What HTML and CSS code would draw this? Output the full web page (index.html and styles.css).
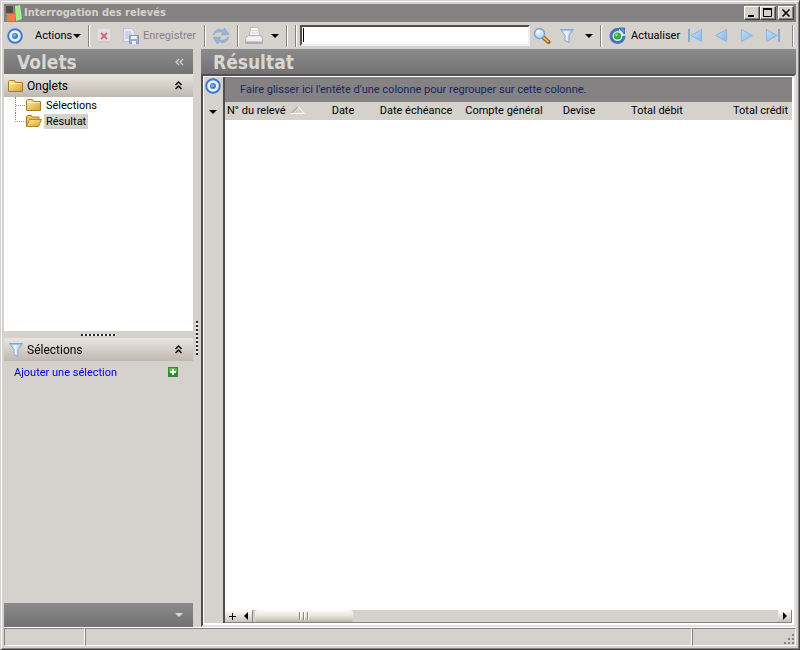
FILE: index.html
```html
<!DOCTYPE html>
<html lang="fr">
<head>
<meta charset="utf-8">
<title>Interrogation des relevés</title>
<link rel="stylesheet" href="styles.css">
</head>
<body>
<svg class="defs" aria-hidden="true">
  <defs>
    <linearGradient id="gold" x1="0" y1="0" x2="1" y2="1"><stop offset="0" stop-color="#fff0a0"/><stop offset="1" stop-color="#daa02c"/></linearGradient>
    <linearGradient id="blue" x1="0" y1="0" x2="1" y2="1"><stop offset="0" stop-color="#c4dff8"/><stop offset="1" stop-color="#86b8ec"/></linearGradient>
    <linearGradient id="glass" x1="0" y1="0" x2="1" y2="0"><stop offset="0" stop-color="#a9c9f4"/><stop offset=".45" stop-color="#eef6ff"/><stop offset="1" stop-color="#8db1e8"/></linearGradient>
    <symbol id="target" viewBox="0 0 18 18">
      <circle cx="9" cy="9" r="6.800" fill="#e8f1fc" stroke="#4379cb" stroke-width="2"/>
      <circle cx="9" cy="9" r="3" fill="#3f7fd0"/>
      <circle cx="8.500" cy="8.500" r="1.500" fill="#7fb0ea"/>
    </symbol>
    <symbol id="folder" viewBox="0 0 16 16">
      <path d="M.5 13.500v-10l1-1h5l1 2h7v9h-14z" fill="url(#gold)" stroke="#a87c26"/>
      <path d="M1.500 5.500h12" stroke="#fff6c4" fill="none"/>
    </symbol>
    <symbol id="folder-open" viewBox="0 0 16 16">
      <path d="M.5 13.500v-10l1-1h4l1 1.500h6.500v3" fill="#eebf56" stroke="#a87c26"/>
      <path d="M.5 13.500l3-7h12l-3 7z" fill="url(#gold)" stroke="#b88728"/>
    </symbol>
    <symbol id="funnel" viewBox="0 0 16 16">
      <path d="M1.500 1.500h13l-4.500 6v7l-4-2v-5z" fill="url(#glass)" stroke="#8ba5cf"/>
      <path d="M3 2.500h10" stroke="#a5c2ec"/>
    </symbol>
    <symbol id="chevrons" viewBox="0 0 8 9">
      <path d="M1 4l3-3 3 3M1 8l3-3 3 3" fill="none" stroke="#000" stroke-width="1.400"/>
    </symbol>
    <symbol id="down" viewBox="0 0 8 4"><path d="M0 0h8l-4 4z" fill="currentColor"/></symbol>
  </defs>
</svg>
<div class="window">
  <header class="titlebar">
    <svg class="applogo" viewBox="0 0 16 16"><path d="M0 1h7v7H0z" fill="#514d48"/><path d="M1 9h8v7H1z" fill="#f47d4b"/><path d="M9 1l5-1 2 14-6 2z" fill="#a3ef8c"/></svg>
    <h1>Interrogation des relevés</h1>
    <button class="winbtn" aria-label="Réduire"><svg viewBox="0 0 12 10"><path d="M2 8h6" stroke="#000" stroke-width="2"/></svg></button>
    <button class="winbtn" aria-label="Agrandir"><svg viewBox="0 0 12 10"><path d="M1.500 1v7.500h8V1" fill="none" stroke="#000"/><path d="M1 1h9" stroke="#000" stroke-width="2"/></svg></button>
    <button class="winbtn close" aria-label="Fermer"><svg viewBox="0 0 12 10"><path d="M2.500 1.500l7 7M9.500 1.500l-7 7" stroke="#000" stroke-width="1.600"/></svg></button>
  </header>

  <nav class="toolbar">
    <svg class="ico18"><use href="#target"/></svg>
    <button class="tool actions">Actions<svg class="caret"><use href="#down"/></svg></button>
    <i class="sep"></i>
    <button class="tool delete" disabled aria-label="Supprimer"><svg class="ico16" viewBox="0 0 16 16"><path d="M2 1h12v14H2z" fill="#e2dfe6"/><path d="M2 13h12v2H2z" fill="#c9c6d2"/><path d="M5 5l6 6M11 5l-6 6" stroke="#cf6f78" stroke-width="2.200"/></svg></button>
    <button class="tool save" disabled><svg class="ico18" viewBox="0 0 18 18"><path d="M1.500 1.500h8l3 3v10h-11z" fill="#e8ebf5" stroke="#b9bfd7"/><path d="M3 5h6M3 7h7M3 9h6M3 11h4" stroke="#adb8da"/><path d="M7.500 8.500h9v8h-9z" fill="#9ba8d4" stroke="#8d98c5"/><path d="M9 9h6v3H9zM10 14h4v3h-4z" fill="#eef0f8"/></svg>Enregistrer</button>
    <i class="sep"></i>
    <button class="tool sync" aria-label="Synchroniser"><svg class="ico18" viewBox="0 0 18 18"><path d="M1.500 8C2 3 7 1 11 3.500L12.500 1 17 7.500l-7.500.5 1.500-2.500C7.500 4 4 5 1.500 8z" fill="#94b6da" stroke="#7c9fc6" stroke-width=".6"/><path d="M16.500 10c-.5 5-5.500 7-9.500 4.500L5.500 17 1 10.500l7.500-.5L7 12.500c3.500 1.500 7 .5 9.500-2.500z" fill="#94b6da" stroke="#7c9fc6" stroke-width=".6"/></svg></button>
    <i class="sep"></i>
    <button class="tool print" aria-label="Imprimer"><svg class="ico18" viewBox="0 0 18 18"><path d="M4.500 9l1-8.500h8l1 8.500" fill="#fafafa" stroke="#bbb8b8"/><path d="M6.500 3.500h6M6 6h7" stroke="#d4d2d2"/><path d="M3 8.500h13l1.500 3v5H.5v-5z" fill="#eeedee" stroke="#b4b1b2"/><path d="M2 11.500h14" stroke="#fff"/><path d="M1 15.500h16" stroke="#aaa8b4" stroke-width="2"/></svg><svg class="caret"><use href="#down"/></svg></button>
    <i class="sep"></i><i class="sep second"></i>
    <input class="search" type="text" aria-label="Rechercher" autofocus>
    <button class="tool find" aria-label="Chercher"><svg class="ico18" viewBox="0 0 18 18"><path d="M10.500 10.500l5 4.500" stroke="#8a5c19" stroke-width="4" stroke-linecap="round"/><path d="M10.500 10.500l4.500 4" stroke="#e9b551" stroke-width="2" stroke-linecap="round"/><circle cx="6.500" cy="6.500" r="5" fill="#c3e1fd" stroke="#7ba2d6" stroke-width="1.400"/><ellipse cx="5.500" cy="5" rx="2.500" ry="2" fill="#f1f9ff"/></svg></button>
    <button class="tool filter" aria-label="Filtrer"><svg class="ico16"><use href="#funnel"/></svg><svg class="caret"><use href="#down"/></svg></button>
    <i class="sep"></i>
    <button class="tool refresh"><svg class="ico18" viewBox="0 0 18 18"><circle cx="8.500" cy="9" r="6" fill="#dce9f8"/><path d="M10 2.700a6.500 6.500 0 1 0 5 6.300" fill="none" stroke="#4772b5" stroke-width="3"/><path d="M10 1h5.500v6z" fill="#5a91d9" stroke="#3d6fb8"/><circle cx="8.500" cy="9" r="3.600" fill="#2cb13d"/><circle cx="7.500" cy="8" r="1.400" fill="#83e57e"/></svg>Actualiser</button>
    <button class="tool nav" aria-label="Premier"><svg class="ico16" viewBox="0 0 16 16"><path d="M14.500 1.500v12L4 7.500z" fill="url(#blue)" stroke="#8cb4e2"/><path d="M2 1v13" stroke="#8aa9d2" stroke-width="2"/></svg></button>
    <button class="tool nav" aria-label="Précédent"><svg class="ico16" viewBox="0 0 16 16"><path d="M13.500 1.500v12L2.500 7.500z" fill="url(#blue)" stroke="#8cb4e2"/></svg></button>
    <button class="tool nav" aria-label="Suivant"><svg class="ico16" viewBox="0 0 16 16"><path d="M2.500 1.500v12L13.500 7.500z" fill="url(#blue)" stroke="#8cb4e2"/></svg></button>
    <button class="tool nav" aria-label="Dernier"><svg class="ico16" viewBox="0 0 16 16"><path d="M1.500 1.500v12L12 7.500z" fill="url(#blue)" stroke="#8cb4e2"/><path d="M14 1v13" stroke="#8aa9d2" stroke-width="2"/></svg></button>
    <i class="sep last"></i>
  </nav>

  <main class="work">
    <aside class="side">
      <div class="heading"><h2>Volets</h2><button class="collapse" aria-label="Replier"><svg viewBox="0 0 9 8"><path d="M4 1L1 4l3 3M8 1L5 4l3 3" fill="none" stroke="#dedbd6" stroke-width="1.200"/></svg></button></div>
      <button class="section"><svg class="ico16"><use href="#folder"/></svg><span>Onglets</span><svg class="chev"><use href="#chevrons"/></svg></button>
      <ul class="tree">
        <li><i class="branch"></i><svg class="ico16"><use href="#folder"/></svg><a href="#selections">Sélections</a></li>
        <li><i class="branch end"></i><svg class="ico16"><use href="#folder-open"/></svg><a href="#resultat" class="current">Résultat</a></li>
      </ul>
      <div class="hsplit"><i class="dots"></i></div>
      <button class="section" id="selections"><svg class="ico16"><use href="#funnel"/></svg><span>Sélections</span><svg class="chev"><use href="#chevrons"/></svg></button>
      <div class="addrow"><a href="#ajouter">Ajouter une sélection</a><button class="add" aria-label="Ajouter"><svg viewBox="0 0 10 10"><path d="M0 0h10v10H0z" fill="#2f8a2f"/><path d="M1 1h8v4H1z" fill="#5fb455"/><path d="M5 2v6M2 5h6" stroke="#fff" stroke-width="2"/></svg></button></div>
      <div class="sidefoot"><button aria-label="Plus"><svg class="caret"><use href="#down"/></svg></button></div>
    </aside>
    <div class="vsplit"><i class="vdots"></i></div>
    <section class="content" id="resultat">
      <div class="heading"><h2>Résultat</h2></div>
      <div class="gridbox">
        <div class="gutter"><svg class="ico18"><use href="#target"/></svg><svg class="caret"><use href="#down"/></svg></div>
        <div class="grid">
          <p class="groupby">Faire glisser ici l'entête d'une colonne pour regrouper sur cette colonne.</p>
          <table>
            <colgroup><col class="c-num"><col class="c-date"><col class="c-due"><col class="c-account"><col class="c-currency"><col class="c-debit"><col></colgroup>
            <thead><tr><th class="first">N° du relevé<svg class="sort" viewBox="0 0 14 8"><path d="M0 7.500L7 .5" stroke="#918e87"/><path d="M7 .5l6.500 7H0" stroke="#fff" fill="none"/></svg></th><th>Date</th><th>Date échéance</th><th>Compte général</th><th>Devise</th><th>Total débit</th><th class="right">Total crédit</th></tr></thead>
          </table>
          <div class="rows"></div>
          <div class="hscroll">
            <button class="plus" aria-label="Ajouter"><svg viewBox="0 0 7 7"><path d="M3 0h1v3h3v1H4v3H3V4H0V3h3z"/></svg></button>
            <button class="arrow" aria-label="Gauche"><svg viewBox="0 0 6 8"><path d="M5 0v8L1 4z"/></svg></button>
            <div class="track"><div class="thumb"><i></i><i></i><i></i></div></div>
            <button class="arrow" aria-label="Droite"><svg viewBox="0 0 6 8"><path d="M1 0v8l4-4z"/></svg></button>
          </div>
        </div>
      </div>
    </section>
  </main>

  <footer class="status">
    <div class="cell small"></div><div class="cell wide"></div>
    <div class="cell grip"><svg viewBox="0 0 12 12"><path d="M9 1h2v2H9zM5 5h2v2H5zM9 5h2v2H9zM1 9h2v2H1zM5 9h2v2H5zM9 9h2v2H9z" fill="#86837f"/></svg></div>
  </footer>
</div>
</body>
</html>
```
FILE: styles.css
```css
* { box-sizing: border-box; }
body { margin: 0; background: #d5d2cd; color: #000; font: 11px/14px Roboto, "DejaVu Sans Condensed", sans-serif; }
button { font: inherit; color: inherit; border: 0; padding: 0; background: none; display: flex; align-items: center; flex: none; }
h1, h2, p, ul { margin: 0; padding: 0; }
svg { display: block; flex: none; }
.defs { position: absolute; width: 0; height: 0; }
.ico16 { width: 16px; height: 16px; }
.ico18 { width: 18px; height: 18px; }
.caret { width: 8px; height: 4px; }

.window { display: flex; flex-direction: column; height: 100vh; padding: 3px; border: 1px solid; border-color: #d5d2cd #434146 #434146 #d5d2cd; box-shadow: inset 1px 1px #fff, inset -1px -1px #858287; }

.titlebar { display: flex; align-items: center; height: 18px; flex: none; background: #858284; padding: 0 2px; }
.applogo { width: 16px; height: 16px; }
.titlebar h1 { flex: 1; margin-left: 2px; font: bold 11px/14px "DejaVu Sans Condensed", sans-serif; color: #d5d2cd; }
.winbtn { width: 16px; height: 14px; background: #d5d2cd; border: 1px solid; border-color: #fff #434146 #434146 #fff; box-shadow: inset -1px -1px #858284; justify-content: center; }
.winbtn svg { width: 12px; height: 10px; }
.close { margin-left: 2px; }

.toolbar { display: flex; align-items: center; height: 27px; flex: none; padding: 0 2px; }
.actions { margin-left: 11px; width: 46px; justify-content: space-between; }
.sep { width: 2px; height: 22px; flex: none; margin: 0 7px; background: linear-gradient(90deg, #858284 50%, #fff 50%); }
.tool:disabled { color: #858284; }
.delete { margin-left: -1px; }
.save { gap: 3px; margin-left: 10px; width: 75px; }
.sync { margin-left: -1px; }
.print { gap: 8px; margin-left: -1px; }
.second { margin: 0 3px 0 0; }
.search { flex: 1; min-width: 0; height: 21px; border: 2px solid; border-color: #514e4d #f0efed #f0efed #514e4d; background: linear-gradient(#000, #000) 1px 1px / 1px 14px no-repeat #fff; padding: 0 1px; font: inherit; outline: 0; caret-color: transparent; }
.find { margin-left: 3px; }
.filter { gap: 10px; margin-left: 8px; }
.refresh { gap: 4px; width: 69px; margin-right: 4px; }
.nav { width: 26px; justify-content: center; }
.last { margin: 0 0 0 6px; }

.work { display: flex; flex: 1; min-height: 0; }
.side { display: flex; flex-direction: column; width: 189px; flex: none; }
.heading { display: flex; align-items: center; justify-content: space-between; height: 25px; flex: none; padding: 0 9px 0 13px; background: linear-gradient(#8b8b8b, #727272); color: #dad7d2; }
.heading h2 { font: bold 19px/24px "DejaVu Sans Condensed", sans-serif; }
.collapse svg { width: 9px; height: 8px; }
.section { height: 23px; width: 100%; padding: 0 10px 0 4px; gap: 3px; background: linear-gradient(#e9e6e1, #bfb8b0); text-align: left; font-size: 12px; }
.section span { flex: 1; }
.chev { width: 9px; height: 9px; }
.tree { height: 234px; flex: none; background: #fff; list-style: none; }
.tree li { display: flex; align-items: center; height: 16px; padding-left: 11px; }
.tree a { color: #000; text-decoration: none; padding: 0 2px; margin-left: 2px; line-height: 15px; }
.tree .current { background: #d5d2cd; }
.branch { width: 11px; height: 16px; border-left: 1px dotted #858284; background: repeating-linear-gradient(90deg, #999 0 1px, transparent 1px 2px) 0 8px / 100% 1px no-repeat; }
.end { align-self: flex-start; height: 9px; border-bottom: 1px dotted #999; background: none; }
.hsplit { height: 7px; flex: none; display: flex; justify-content: center; align-items: center; }
.dots { width: 35px; height: 2px; background: repeating-linear-gradient(90deg, #222 0 2px, #f5f4f2 2px 4px); }
.addrow { flex: 1; display: flex; justify-content: space-between; align-items: flex-start; padding: 5px 15px 0 10px; }
.addrow a { color: #0000e0; text-decoration: none; }
.add { padding-top: 1px; }
.add svg { width: 10px; height: 10px; }
.sidefoot { height: 24px; flex: none; display: flex; justify-content: flex-end; align-items: center; padding-right: 10px; color: #dad7d2; background: linear-gradient(#8b8b8b, #727272); }

.vsplit { width: 8px; flex: none; display: flex; justify-content: center; align-items: center; }
.vdots { width: 2px; height: 35px; background: repeating-linear-gradient(#222 0 2px, #f5f4f2 2px 4px); }
.content { flex: 1; min-width: 0; display: flex; flex-direction: column; }
.content .heading { padding-left: 12px; }
.gridbox { flex: 1; min-height: 0; display: flex; border: 2px solid; border-color: #514e4d #e5e3df #e5e3df #514e4d; background: #fff; padding: 1px 2px 2px 1px; }
.gutter { width: 21px; flex: none; display: flex; flex-direction: column; align-items: flex-start; gap: 15px; background: #d5d2cd; border-right: 2px solid #514e4d; }
.gutter .caret { margin-left: 5px; }
.grid { flex: 1; min-width: 0; display: flex; flex-direction: column; }
.groupby { height: 25px; flex: none; padding: 6px 15px 0; background: #858284; color: #162663; white-space: nowrap; }
table { width: 100%; table-layout: fixed; border-collapse: collapse; flex: none; }
th { height: 18px; padding: 0; font-weight: normal; text-align: center; background: #d5d2cd; white-space: nowrap; }
.first { text-align: left; padding-left: 2px; }
.right { text-align: right; padding-right: 4px; }
.sort { display: inline-block; width: 14px; height: 8px; margin-left: 5px; }
.c-num { width: 85px; } .c-date { width: 66px; } .c-due { width: 80px; } .c-account { width: 96px; } .c-currency { width: 54px; } .c-debit { width: 102px; }
.rows { flex: 1; }
.hscroll { display: flex; height: 13px; flex: none; background: #d5d2cd; border-bottom: 1px solid #858284; }
.plus, .arrow { width: 14px; justify-content: center; background: linear-gradient(#fff, #c8c4bd); }
.plus svg { width: 7px; height: 7px; }
.arrow { border-right: 1px solid #858284; }
.arrow svg { width: 6px; height: 8px; }
.track { flex: 1; padding-left: 2px; display: flex; }
.thumb { width: 98px; display: flex; justify-content: center; align-items: center; gap: 2px; border-radius: 3px; background: linear-gradient(#fbfaf7, #e6e5dc 50%, #b8b6ac); }
.thumb i { width: 2px; height: 8px; background: linear-gradient(90deg, #88867f 50%, #fff 50%); }

.status { display: flex; height: 19px; flex: none; border-top: 1px solid #fff; }
.cell { border: 1px solid; border-color: #858284 #fff #fff #858284; }
.small { width: 81px; }
.wide { flex: 1; }
.grip { width: 104px; display: flex; justify-content: flex-end; align-items: flex-end; }
.grip svg { width: 12px; height: 12px; }
```
